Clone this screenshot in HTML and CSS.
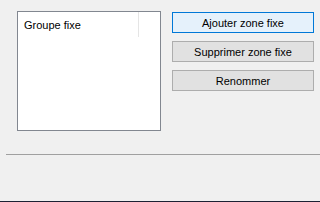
FILE: index.html
```html
<!DOCTYPE html>
<html lang="fr">

<head>
  <meta charset="UTF-8">
  <meta name="viewport" content="width=device-width, initial-scale=1.0">
  <title>Groupes fixes</title>

  <link rel="stylesheet" href="styles.css">
</head>

<body>
  <div class="window">
    <div class="top">
      <div class="list">
        <div class="row">
          <span class="cell">Groupe fixe</span>
          <span class="divider"></span>
        </div>
      </div>
      <div class="actions">
        <button class="button primary">Ajouter zone fixe</button>
        <button class="button">Supprimer zone fixe</button>
        <button class="button">Renommer</button>
      </div>
    </div>
    <div class="separator"></div>
    <div class="spacer"></div>
    <div class="taskbar"></div>
  </div>
</body>

</html>
```

FILE: styles.css
```css
* {
  box-sizing: border-box;
}

body {
  margin: 0;
  background-color: #f0f0f0;
  font-family: "Liberation Sans", Arial, sans-serif;
  font-size: 11px;
  color: #000;
}

.window {
  display: flex;
  flex-direction: column;
  height: 202px;
}

.top {
  display: flex;
  padding: 11px 6px 0 17px;
  gap: 11px;
}

.list {
  width: 144px;
  height: 120px;
  border: 1px solid #828790;
  background-color: #fff;
}

.list .row {
  display: flex;
  height: 25px;
}

.list .cell {
  width: 120px;
  padding: 7px 0 0 6px;
}

.list .divider {
  width: 1px;
  height: 25px;
  background-color: #e5e5e5;
}

.actions {
  display: flex;
  flex-direction: column;
  gap: 8px;
  padding-top: 1px;
}

.button {
  width: 142px;
  height: 21px;
  padding: 0;
  border: 1px solid #adadad;
  background-color: #e1e1e1;
  font-family: inherit;
  font-size: 11px;
  color: #000;
  outline: none;
}

.button.primary {
  border-color: #0078d7;
  background-color: #e5f1fb;
}

.separator {
  height: 1px;
  margin: 23px 0 0 6px;
  background-color: #a0a0a0;
}

.spacer {
  flex: 1;
}

.taskbar {
  height: 1px;
  background-color: #1c2133;
}
```
